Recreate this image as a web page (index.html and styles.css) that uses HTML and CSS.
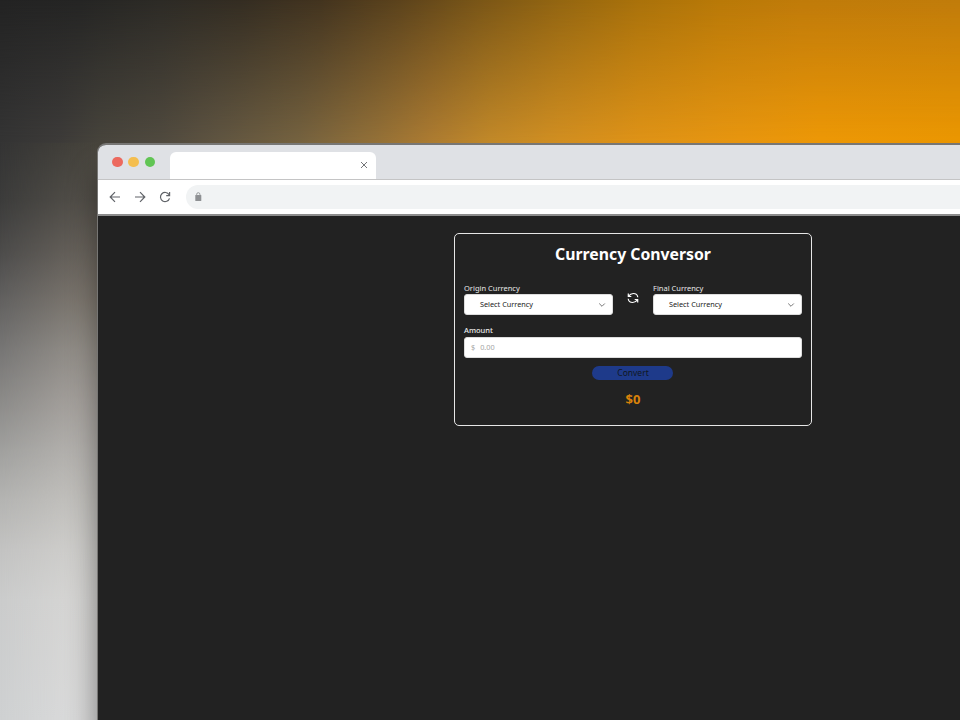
FILE: index.html
```html
<!DOCTYPE html>
<html lang="en">
<head>
<meta charset="utf-8">
<title>Currency Conversor</title>
<link rel="stylesheet" href="styles.css">
</head>
<body>
<div class="sky"></div>
<div class="side"></div>
<main class="window">
  <header class="tabs">
    <div class="lights"><i class="red"></i><i class="yellow"></i><i class="green"></i></div>
    <div class="tab">
      <svg width="8" height="8" viewBox="0 0 8 8"><path d="M1 1l6 6M7 1L1 7"/></svg>
    </div>
  </header>
  <nav class="toolbar">
    <svg width="12" height="12" viewBox="0 0 12 12"><path d="M11 6H1.5M6 1.2L1.2 6L6 10.8"/></svg>
    <svg width="12" height="12" viewBox="0 0 12 12"><path d="M1 6h9.500M6 1.2L10.800 6L6 10.800"/></svg>
    <svg width="12" height="12" viewBox="0 0 12 12"><path d="M10.100 3.800A4.600 4.600 0 1 0 10.500 7.300M10.600 1v3.600H7.200"/></svg>
    <div class="address">
      <svg width="8" height="10" viewBox="0 0 8 10"><rect x="1.300" y="3" width="6" height="6" rx=".6"/><path d="M2.700 4V2.300a1.600 1.600 0 0 1 3.200 0V4"/></svg>
    </div>
  </nav>
  <section class="page">
    <div class="card">
      <h1>Currency Conversor</h1>
      <div class="pair">
        <div class="field">
          <label class="origin">Origin Currency</label>
          <div class="select"><span>Select Currency</span><svg width="8" height="6" viewBox="0 0 8 6"><path d="M1.200 1.500L4 4.300l2.800-2.800"/></svg></div>
        </div>
        <svg class="swap" width="12" height="12" viewBox="0 0 12 12"><path d="M10.800 5.200C10.500 2.800 8.700 1.500 6.300 1.500 4.300 1.500 2.800 2.400 1.400 4.300M1.300 1.500v3h3M1.200 6.800C1.500 9.200 3.300 10.500 5.700 10.500c2 0 3.500-.9 4.900-2.800M10.700 10.500v-3h-3"/></svg>
        <div class="field">
          <label class="final">Final Currency</label>
          <div class="select"><span>Select Currency</span><svg width="8" height="6" viewBox="0 0 8 6"><path d="M1.200 1.500L4 4.300l2.800-2.800"/></svg></div>
        </div>
      </div>
      <div class="field amount">
        <label>Amount</label>
        <div class="input"><span>$</span><span>0.00</span></div>
      </div>
      <button class="convert">Convert</button>
      <p class="result">$0</p>
    </div>
  </section>
</main>
</body>
</html>
```
FILE: styles.css
```css
* { box-sizing: border-box; }
body {
  margin: 0;
  width: 960px;
  height: 720px;
  overflow: hidden;
  display: grid;
  grid-template: 143px 577px / 97px 863px;
  font-family: "Noto Sans", "Open Sans", sans-serif;
  background: #47443c;
}
.sky {
  grid-area: 1 / 1 / 2 / 3;
  background: linear-gradient(90deg, #232323 0, #252524 80px, #2d2b26 160px, #342d22 240px, #43341f 320px, #5c431c 400px, #7a5617 480px, #946611 560px, #aa720b 640px, #b97908 720px, #c07b0a 800px, #c17c0b 960px);
}
.sky::before {
  content: "";
  display: block;
  height: 100%;
  background: linear-gradient(90deg, #343434 0, #3d3b39 60px, #47443c 100px, #504a3f 160px, #615642 220px, #766340 300px, #967238 380px, #ad7c32 430px, #c28929 490px, #d28f21 560px, #df9317 640px, #e8960f 740px, #ed9806 820px, #eb9701 960px);
  -webkit-mask-image: linear-gradient(transparent, #000);
  mask-image: linear-gradient(transparent, #000);
}
.side {
  grid-area: 2 / 1;
  background: linear-gradient(#343434 0, #3c3c3b 57px, #4c4b4a 107px, #626160 157px, #777675 207px, #8b8a88 257px, #a0a09e 307px, #b4b4b2 357px, #c3c3c2 407px, #cbcccc 457px, #cfd1d2 577px);
}
.side::before {
  content: "";
  display: block;
  height: 100%;
  background: linear-gradient(#47443c 0, #57534c 57px, #6c665e 107px, #827b72 157px, #99948d 207px, #aba6a1 257px, #b9b6b2 307px, #c6c4c0 357px, #d2d1ce 407px, #d9d8d6 457px, #dddddd 577px);
  -webkit-mask-image: linear-gradient(90deg, transparent, #000);
  mask-image: linear-gradient(90deg, transparent, #000);
}
.window {
  grid-area: 2 / 2;
  position: relative;
  z-index: 1;
  display: flex;
  flex-direction: column;
  border: solid #777674;
  border-width: 2px 0 0 1px;
  border-radius: 9px 0 0 0;
  background: #222;
  box-shadow: 0 30px 30px rgba(0, 0, 0, .45);
  overflow: hidden;
}
.tabs {
  height: 35px;
  flex: none;
  display: flex;
  align-items: flex-end;
  border-bottom: 1px solid #c4c4c5;
  background: #dfe1e5;
}
.lights {
  display: flex;
  gap: 5.500px;
  align-self: center;
  padding-left: 14px;
  width: 72px;
}
.lights i { width: 10.800px; height: 10.800px; border-radius: 50%; flex: none; }
.red { background: #ec695e; }
.yellow { background: #f4be4f; }
.green { background: #61c554; }
.tab {
  width: 206px;
  height: 27px;
  padding: 0 8px 2px 0;
  display: flex;
  align-items: center;
  justify-content: flex-end;
  background: #fff;
  border-radius: 6px 6px 0 0;
}
svg { fill: none; stroke: #606368; stroke-width: 1.200; flex: none; }
.tab svg { stroke-width: 1; stroke: #737578; }
.toolbar {
  height: 36px;
  flex: none;
  display: flex;
  align-items: center;
  gap: 13px;
  padding-left: 11px;
  background: #fff;
  border-bottom: 2px solid #8c8c8c;
}
.address {
  flex: 1;
  height: 24px;
  margin-left: 2px;
  padding-left: 8px;
  display: flex;
  align-items: center;
  background: #f1f3f4;
  border-radius: 12px 0 0 12px;
}
.address svg { stroke: #95979a; stroke-width: 1; }
.address rect { fill: #8e9093; stroke: none; }
.page { padding: 17px 148px 0 356px; }
.card {
  height: 193px;
  border: 1px solid #e6e6e6;
  border-radius: 5px;
  padding: 10px 9px 0;
  display: flex;
  flex-direction: column;
  align-items: center;
}
h1 {
  margin: 0;
  font-size: 15.800px;
  line-height: 20px;
  font-weight: 700;
  color: #fff;
  white-space: nowrap;
}
.pair {
  width: 100%;
  display: grid;
  grid-template-columns: 149px 1fr 149px;
  margin-top: 18px;
}
.field { display: flex; flex-direction: column; }
label { font-size: 7.500px; line-height: 12px; color: #e8e8e8; white-space: nowrap; font-weight: 400; }
.select, .input {
  height: 21px;
  background: #fff;
  border: 1px solid #ddd;
  border-radius: 3px;
  display: flex;
  align-items: center;
  padding-bottom: 1px;
  font-size: 7.300px;
  line-height: 10px;
  color: #222;
}
.select { justify-content: space-between; padding: 0 6px 1px 15px; }
.select svg { stroke: #777; stroke-width: 1; margin-top: 1px; }
.swap { justify-self: center; margin-top: 10px; stroke: #fff; stroke-width: 1.200; }
.amount { width: 100%; margin-top: 9px; }
.amount label { font-weight: 500; margin-bottom: 1px; }
.input { gap: 5px; padding-left: 6px; color: #a5a5a5; }
.convert {
  width: 81px;
  height: 14px;
  margin: 8px 1px 0 0;
  padding: 0 0 0 1px;
  border: 0;
  border-radius: 7px;
  background: #1e3a8a;
  color: #101722;
  font: 8.500px/14px "Noto Sans", sans-serif;
}
.result { margin: 10px 0 0; font-size: 13px; line-height: 18px; font-weight: 700; color: #d9820a; }
```
